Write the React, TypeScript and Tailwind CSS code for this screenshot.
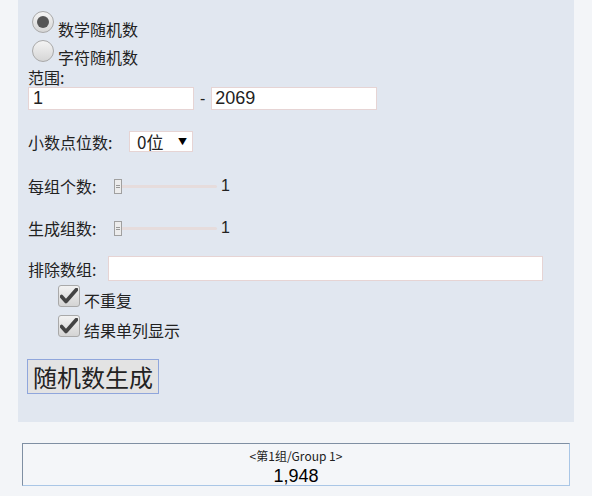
import React from 'react';

const cjk = "font-['Microsoft_YaHei','Noto_Sans_CJK_SC',sans-serif]";
const latin = "font-['Liberation_Sans','Noto_Sans_CJK_SC',sans-serif]";

function Radio({ checked }: { checked?: boolean }) {
    return (
        <div className="w-[22px] h-[22px] rounded-full border border-[#a9a9a9] bg-gradient-to-b from-[#f4f4f4] to-[#d6d6d6] flex items-center justify-center shrink-0">
            {checked && <div className="w-[12px] h-[12px] rounded-full bg-[#555]" />}
        </div>
    );
}

function Check() {
    return (
        <div className="w-[22px] h-[22px] rounded-[3px] border border-[#a9a9a9] bg-gradient-to-b from-[#f2f2f2] to-[#d4d4d4] flex items-center justify-center shrink-0">
            <svg width="18" height="16" viewBox="0 0 18 16">
                <path d="M1.5 8.5 L6 13.5 L16.5 1.5" fill="none" stroke="#444" strokeWidth="3.6" strokeLinecap="round" strokeLinejoin="round" />
            </svg>
        </div>
    );
}

function Slider() {
    return (
        <div className="relative w-[103px] h-[15px] mr-[4px]">
            <div className="absolute left-0 right-0 top-[6px] h-[3px] bg-[#e6dcdc] rounded" />
            <div className="absolute left-0 top-0 w-[8px] h-[15px] bg-[#ececec] border border-[#a0a0a0] flex flex-col items-center justify-center gap-[1px]">
                <div className="w-[4px] h-px bg-[#999]" />
                <div className="w-[4px] h-px bg-[#999]" />
            </div>
        </div>
    );
}

export default function App() {
    return (
        <div className={`min-h-[496px] bg-[#f3f5f8] ${cjk} text-[#222]`}>
            <div className="mx-[18px] bg-[#e1e7f0] pl-[10px] pt-[11px] h-[422px]">
                <div className="flex items-start pl-[4px] h-[29px]">
                    <Radio checked />
                    <span className="text-[16px] leading-[19px] mt-[9px] ml-[4px]">数学随机数</span>
                </div>
                <div className="flex items-start pl-[4px] h-[28px]">
                    <Radio />
                    <span className="text-[16px] leading-[19px] mt-[8px] ml-[4px]">字符随机数</span>
                </div>
                <div className="text-[16px] leading-[19px]">范围:</div>
                <div className="flex items-center h-[23px]">
                    <div className={`w-[166px] h-[23px] bg-white border border-[#e6d4d4] px-[4px] text-[18px] leading-[21px] ${latin}`}>1</div>
                    <span className={`mx-[6px] text-[16px] ${latin}`}>-</span>
                    <div className={`w-[166px] h-[23px] bg-white border border-[#e6d4d4] px-[3px] text-[18px] leading-[21px] ${latin}`}>2069</div>
                </div>
                <div className="flex items-center h-[21px] mt-[21px]">
                    <span className="text-[16px] w-[101px]">小数点位数:</span>
                    <div className="w-[64px] h-[21px] bg-white border border-[#e6d4d4] flex items-center pl-[7px] pr-[5px]">
                        <span className="text-[17px] leading-[19px] flex-1">0位</span>
                        <span className="text-[9px] text-black">▼</span>
                    </div>
                </div>
                <div className="flex items-center h-[16px] mt-[26px]">
                    <span className="text-[16px] w-[86px]">每组个数:</span>
                    <Slider />
                    <span className={`text-[16px] ${latin}`}>1</span>
                </div>
                <div className="flex items-center h-[16px] mt-[26px]">
                    <span className="text-[16px] w-[86px]">生成组数:</span>
                    <Slider />
                    <span className={`text-[16px] ${latin}`}>1</span>
                </div>
                <div className="flex items-center h-[25px] mt-[20px]">
                    <span className="text-[16px] w-[80px]">排除数组:</span>
                    <div className="w-[435px] h-[25px] bg-white border border-[#e6d4d4]" />
                </div>
                <div className="flex items-start pl-[30px] h-[30px] mt-[4px]">
                    <Check />
                    <span className="text-[16px] leading-[19px] mt-[6px] ml-[4px]">不重复</span>
                </div>
                <div className="flex items-start pl-[30px] h-[30px]">
                    <Check />
                    <span className="text-[16px] leading-[19px] mt-[6px] ml-[4px]">结果单列显示</span>
                </div>
                <button className="mt-[14px] ml-[-1px] h-[35px] px-[5px] bg-[#e3e3e3] border border-[#8fa6dc] text-[24px] leading-[30px] text-[#222]">
                    随机数生成
                </button>
            </div>
            <div className="mx-[22px] mt-[21px] h-[43px] border border-t-[#7f8fa3] border-l-[#7f8fa3] border-r-[#a9c6e6] border-b-[#a9c6e6] bg-[#f4f6f9] flex flex-col items-center">
                <div className="text-[12px] leading-[16px] mt-[4px]">&lt;第1组/Group 1&gt;</div>
                <div className={`text-[18px] leading-[18px] mt-[3px] text-black ${latin}`}>1,948</div>
            </div>
        </div>
    );
}
